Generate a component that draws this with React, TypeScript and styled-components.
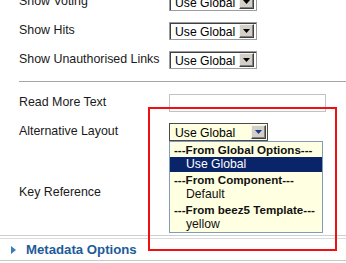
import React from 'react';
import styled, { createGlobalStyle } from 'styled-components';

const Global = createGlobalStyle`
  html, body { margin: 0; padding: 0; background: #fff; }
  body {
    font-family: Arial, "Liberation Sans", sans-serif;
    font-size: 12px;
    color: #1a1a1a;
    overflow: hidden;
  }
`;

const Page = styled.div`
  position: relative;
  width: 346px;
  height: 263px;
  overflow: hidden;
`;

const Form = styled.div`
  margin-top: -7px;
`;

const Row = styled.div<{ $gap?: number }>`
  display: flex;
  align-items: flex-start;
  padding-left: 19px;
  height: 18px;
  margin-top: ${p => (p.$gap ?? 11)}px;
`;

const Label = styled.div`
  width: 150px;
  flex: none;
  font-size: 12.4px;
  line-height: 14px;
  padding-top: 1px;
  white-space: nowrap;
`;

const FieldWrap = styled.div`
  position: relative;
`;

const Select = styled.div<{ $w: number; $open?: boolean }>`
  box-sizing: border-box;
  width: ${p => p.$w}px;
  height: 18px;
  display: flex;
  align-items: center;
  border: 1px solid ${p => (p.$open ? '#4a4a4a' : '#9c9c9c')};
  box-shadow: ${p => (p.$open ? 'none' : 'inset 1px 1px 0 #404040')};
  background: ${p => (p.$open ? '#ffffe1' : '#fff')};
  padding: 0 ${p => (p.$open ? 1 : 2)}px 0 5px;
`;

const SelectText = styled.span`
  flex: 1;
  font-size: 12.2px;
  line-height: 14px;
  padding-top: 1px;
  color: #000;
  white-space: nowrap;
`;

const ArrowBtn = styled.span`
  box-sizing: border-box;
  width: 15px;
  height: 14px;
  flex: none;
  background: #d4d0c8;
  border: 1px solid;
  border-color: #f4f4f4 #404040 #404040 #f4f4f4;
  box-shadow: inset -1px -1px 0 #808080;
  display: flex;
  align-items: center;
  justify-content: center;
`;

const TextInput = styled.div`
  box-sizing: border-box;
  width: 157px;
  height: 18px;
  border: 1px solid #c2c2c2;
  background: #fff;
`;

const Menu = styled.div`
  position: absolute;
  left: 0;
  top: 18px;
  width: 154px;
  box-sizing: border-box;
  border: 1px solid #7f9db9;
  background: #ffffe1;
  z-index: 2;
`;

const Item = styled.div<{ $header?: boolean; $selected?: boolean }>`
  height: 15px;
  line-height: 15px;
  padding-left: ${p => (p.$header ? 4 : 16)}px;
  font-size: ${p => (p.$header ? 11.6 : 12.2)}px;
  font-weight: ${p => (p.$header ? 'bold' : 'normal')};
  background: ${p => (p.$selected ? '#0a246a' : 'transparent')};
  color: ${p => (p.$selected ? '#fff' : '#111')};
  white-space: nowrap;
`;

const Separator = styled.div`
  margin: 12px 0 0 19px;
  border-top: 1px solid #a6a6a6;
`;

const PaneDivider = styled.div`
  margin-top: 33px;
  border-top: 1px solid #cfcfcf;
`;

const PaneHeader = styled.div`
  margin-top: 2px;
  height: 21px;
  border-top: 1px solid #dcdcdc;
  border-bottom: 1px solid #c8c8c8;
  display: flex;
  align-items: center;
  gap: 10px;
  padding-left: 11px;
`;

const PaneTitle = styled.span`
  font-size: 13.2px;
  font-weight: bold;
  color: #1d5b98;
  line-height: 15px;
`;

const Annotation = styled.div`
  position: absolute;
  left: 148px;
  top: 107px;
  width: 189px;
  height: 144px;
  box-sizing: border-box;
  border: 2px solid #ee1111;
  pointer-events: none;
  z-index: 3;
`;

const Arrow = ({ color }: { color: string }) => (
  <svg width="7" height="4" viewBox="0 0 7 4">
    <path d="M0 0h7L3.5 4z" fill={color} />
  </svg>
);

const Dropdown = ({ w, open }: { w: number; open?: boolean }) => (
  <Select $w={w} $open={open}>
    <SelectText>Use Global</SelectText>
    <ArrowBtn>
      <Arrow color={open ? '#1a3a8a' : '#000'} />
    </ArrowBtn>
  </Select>
);

export default function App() {
  return (
    <Page>
      <Global />
      <Form>
        <Row $gap={0}>
          <Label>Show Voting</Label>
          <Dropdown w={88} />
        </Row>
        <Row>
          <Label>Show Hits</Label>
          <Dropdown w={88} />
        </Row>
        <Row>
          <Label>Show Unauthorised Links</Label>
          <Dropdown w={88} />
        </Row>
        <Separator />
        <Row $gap={12}>
          <Label>Read More Text</Label>
          <TextInput />
        </Row>
        <Row>
          <Label>Alternative Layout</Label>
          <FieldWrap>
            <Dropdown w={99} open />
            <Menu>
              <Item $header>---From Global Options---</Item>
              <Item $selected>Use Global</Item>
              <Item $header>---From Component---</Item>
              <Item>Default</Item>
              <Item $header>---From beez5 Template---</Item>
              <Item>yellow</Item>
            </Menu>
          </FieldWrap>
        </Row>
        <Row $gap={43}>
          <Label>Key Reference</Label>
        </Row>
        <PaneDivider />
        <PaneHeader>
          <svg width="5" height="8" viewBox="0 0 5 8">
            <path d="M0 0L5 4L0 8z" fill="#3b7cbc" />
          </svg>
          <PaneTitle>Metadata Options</PaneTitle>
        </PaneHeader>
      </Form>
      <Annotation />
    </Page>
  );
}
